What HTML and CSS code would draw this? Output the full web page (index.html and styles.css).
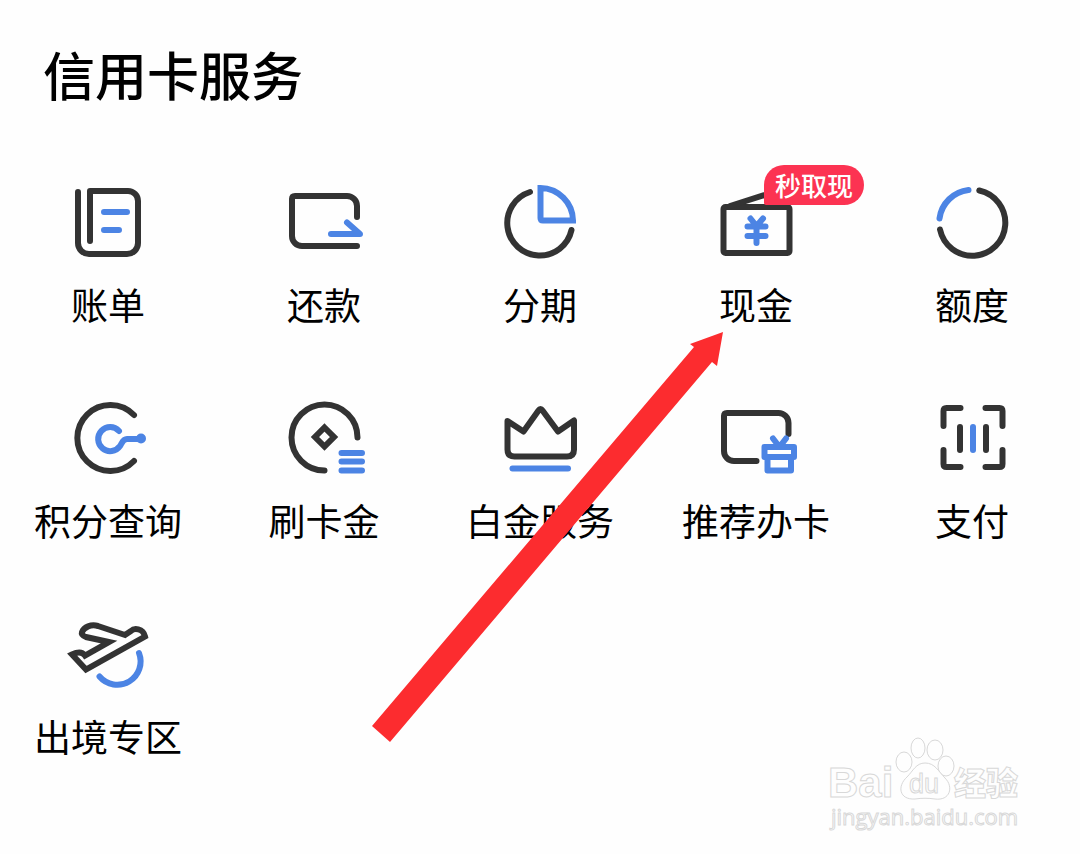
FILE: index.html
```html
<!DOCTYPE html>
<html lang="zh-CN">
<head>
  <meta charset="UTF-8">
  <meta name="viewport" content="width=device-width, initial-scale=1.0">
  <title>信用卡服务</title>
  <link rel="stylesheet" href="styles.css">
</head>
<body>
  <main class="services">
    <h1>信用卡服务</h1>

    <nav class="service-grid">
      <a class="service" href="#">
        <svg class="icon" viewBox="0 0 96 96">
          <path d="M18 18V69a11 11 0 0 0 11 11H67a11 11 0 0 0 11-11V27a10 10 0 0 0-10-10H30V67"/>
          <path class="blue" d="M44 38H67M44 56H59"/>
        </svg>
        <span>账单</span>
      </a>

      <a class="service" href="#">
        <svg class="icon" viewBox="0 0 96 96">
          <path d="M81 43V32a10 10 0 0 0-10-10H19q-3 0-3 3V62a10 10 0 0 0 10 10H81"/>
          <path class="blue" d="M55 60H84L71 48.500"/>
        </svg>
        <span>还款</span>
      </a>

      <a class="service" href="#">
        <svg class="icon" viewBox="0 0 96 96">
          <path d="M38 18A32.500 32.500 0 1 0 79.500 56"/>
          <path class="blue sharp" d="M48.500 14A33 33 0 0 1 81 46.500H51q-2.500 0-2.500-2.500Z"/>
        </svg>
        <span>分期</span>
      </a>

      <a class="service" href="#">
        <svg class="icon" viewBox="0 0 96 96">
          <rect x="15.500" y="33" width="66" height="46" rx="2"/>
          <path d="M22 32L66 18"/>
          <path class="blue" d="M42.500 44.500L48.500 52L55 44.500M48.500 52V69M39.500 52.500H57.500M39.500 62H57.500"/>
        </svg>
        <span>现金</span>
        <em class="badge">秒取现</em>
      </a>

      <a class="service" href="#">
        <svg class="icon" viewBox="0 0 96 96">
          <path d="M55.300 16.500A33 33 0 1 1 16 55.500"/>
          <path class="blue" d="M15.500 44.500A33 33 0 0 1 44.500 16"/>
        </svg>
        <span>额度</span>
      </a>

      <a class="service" href="#">
        <svg class="icon" viewBox="0 0 96 96">
          <path d="M74 25A33 33 0 1 0 74 71"/>
          <path class="blue" d="M59 41A12 12 0 1 0 60 56C62 53 63 49 67 49H81"/>
          <circle class="dot" cx="81" cy="48.500" r="5"/>
        </svg>
        <span>积分查询</span>
      </a>

      <a class="service" href="#">
        <svg class="icon" viewBox="0 0 96 96">
          <path d="M81.500 47.500A33 33 0 1 0 48.500 80.500"/>
          <path class="sharp" d="M48.500 37.500L58 47L48.500 56.500L39 47Z"/>
          <path class="blue" d="M65.500 63H86M65.500 71.500H86M65.500 80.500H86"/>
        </svg>
        <span>刷卡金</span>
      </a>

      <a class="service" href="#">
        <svg class="icon" viewBox="0 0 96 96">
          <path d="M15.500 31L31.500 41.500L46.500 20.500q2-3 4 0L66 41.500L82 30.500V59.500q0 7-7 7H22.500q-7 0-7-7Z"/>
          <path class="blue" d="M20.500 78.500H76"/>
        </svg>
        <span>白金服务</span>
      </a>

      <a class="service" href="#">
        <svg class="icon" viewBox="0 0 96 96">
          <path d="M80.500 44V33a10 10 0 0 0-10-10H19q-3 0-3 3V61a10 10 0 0 0 10 10H48.500"/>
          <path class="blue" d="M56.500 57H86V67H56.500ZM59.500 67V80.500H83V67M65 48.500L70 55M78 48.500L73 55"/>
        </svg>
        <span>推荐办卡</span>
      </a>

      <a class="service" href="#">
        <svg class="icon" viewBox="0 0 96 96">
          <path d="M19.500 36V21q0-3 3-3H36.500M61.500 18H75.500q3 0 3 3V36M19.500 60V74q0 3 3 3H36.500M61.500 77H75.500q3 0 3-3V60M36 37V60M62 37V60"/>
          <path class="blue" d="M49 37V60"/>
        </svg>
        <span>支付</span>
      </a>

      <a class="service" href="#">
        <svg class="icon" viewBox="0 0 96 96">
          <path class="sharp" d="M65 29L38 20C31 18 24 21 22 26Q21 29 26 31L49 36L25 49.500Q21 44 12 48.500L26 63.500L85 30.500C83 22 74 22 71 25Z"/>
          <path class="blue" d="M39.500 70.500A23.300 23.300 0 0 0 79 47"/>
        </svg>
        <span>出境专区</span>
      </a>
    </nav>

    <!-- pointer to the cash service -->
    <svg class="arrow" viewBox="0 0 352 410">
      <path d="M0 394L322 15L318 12L351 0L345 34L340 30L18 410Z"/>
    </svg>
  </main>

  <svg class="watermark" viewBox="0 0 204 104">
    <g>
      <ellipse cx="79" cy="30" rx="8" ry="10"/>
      <ellipse cx="93" cy="16" rx="7" ry="10"/>
      <ellipse cx="110" cy="18" rx="8" ry="10"/>
      <ellipse cx="121" cy="34" rx="8" ry="10"/>
      <path d="M100 31C91 31 88 39 82 45C72 54 74 68 90 67C97 66 103 66 110 67C125 69 129 55 120 46C113 39 110 31 100 31Z"/>
    </g>
    <text class="wm-bai" x="3" y="65">Bai</text>
    <text class="wm-du" x="84" y="61">du</text>
    <text class="wm-cn" x="129" y="63">经验</text>
    <text class="wm-url" x="6" y="93">jingyan.baidu.com</text>
  </svg>
</body>
</html>
```
FILE: styles.css
```css
* {
  box-sizing: border-box;
}

body {
  position: relative;
  min-height: 100vh;
  margin: 0;
  background: #fefefe;
  color: #000;
  font-family: "Noto Sans CJK SC", sans-serif;
}

.services {
  position: relative;
  padding-top: 42px;
}

h1 {
  margin: 0 0 68px;
  padding-left: 43px;
  font-size: 52px;
  font-weight: 500;
  line-height: 64px;
}

.service-grid {
  display: grid;
  grid-template-columns: repeat(5, 1fr);
  row-gap: 64px;
}

.service {
  position: relative;
  display: flex;
  flex-direction: column;
  align-items: center;
  gap: 12px;
  color: inherit;
  font-size: 37px;
  line-height: 44px;
  text-decoration: none;
  white-space: nowrap;
}

.icon {
  width: 96px;
  height: 96px;
  fill: none;
  stroke: #333;
  stroke-width: 6px;
  stroke-linecap: round;
  stroke-linejoin: round;
}

.icon .blue {
  stroke: #4c84e4;
}

.icon .sharp {
  stroke-linejoin: miter;
}

.icon .dot {
  fill: #4c84e4;
  stroke: none;
}

.badge {
  position: absolute;
  top: -9px;
  left: calc(50% + 8px);
  padding: 0 11px;
  border-radius: 20px 20px 20px 2px;
  background: #fc3352;
  color: #fff;
  font-size: 26px;
  font-style: normal;
  font-weight: 500;
  line-height: 40px;
}

.arrow {
  position: absolute;
  top: 332px;
  left: 372px;
  width: 352px;
  height: 410px;
  fill: #fc2c2f;
  pointer-events: none;
}

.watermark {
  position: absolute;
  right: 51px;
  bottom: 18px;
  width: 204px;
  height: 104px;
  fill: #fefefe;
  stroke: #d8d8d8;
  stroke-width: 1px;
}

.wm-bai {
  font: bold 42px "Liberation Sans", sans-serif;
}

.wm-du {
  font: 27px "Liberation Sans", sans-serif;
}

.wm-cn {
  font: 900 32px "Noto Sans CJK SC", sans-serif;
}

.wm-url {
  font: 22px "Open Sans", sans-serif;
}
```
